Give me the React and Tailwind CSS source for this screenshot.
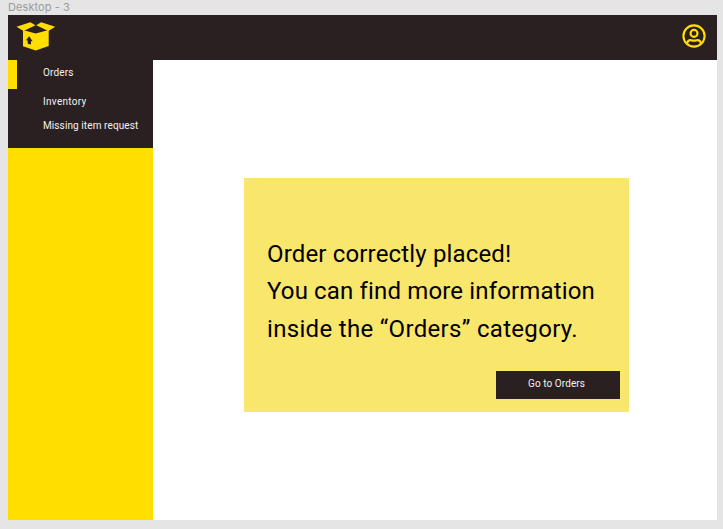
function BoxLogo() {
  return (
    <svg className="block h-[30px] w-[40px]" viewBox="0 0 40 30" fill="#ffde00">
      <path d="M0.500 5.700 14.300 1.300 19.500 4.200 7.500 10Z" />
      <path d="M20.200 4.200 25.200 1.300 39.200 5.700 32.300 10Z" />
      <path fillRule="evenodd" d="M7 9 19.700 12.600 32.700 9V25L19.700 29.400 7 25.300ZM13.200 15.200 9.900 19.300 11.700 19.600V22.700L15 23.500V20.200L16.600 20.300Z" />
    </svg>
  );
}

function UserIcon() {
  return (
    <svg className="block h-6 w-6" viewBox="0 0 24 24" fill="none" stroke="#ffde00" strokeWidth="2.100">
      <circle cx="12" cy="12" r="10.600" />
      <circle cx="12" cy="9.400" r="3.500" />
      <path d="M5.200 19.200C5.600 16.800 7.400 16 9.200 16.200Q12 17.100 14.800 16.200C16.600 16 18.400 16.800 18.800 19.200" />
    </svg>
  );
}

export default function App() {
  return (
    <div className="flex h-[529px] w-[723px] flex-col overflow-hidden bg-[#e5e5e5] pl-2 font-['Roboto',sans-serif]">
      <div className="h-[15px] shrink-0 whitespace-nowrap font-['Inter',sans-serif] text-[11px] leading-[14px] tracking-[0.08px] text-[#9b9b9b]">
        Desktop - 3
      </div>
      <div className="flex h-[505px] w-[709px] shrink-0 flex-col bg-white">
        <header className="flex h-[45px] shrink-0 items-start justify-between bg-[#2b2021] pl-2 pr-[11px]">
          <div className="pt-[6px]"><BoxLogo /></div>
          <div className="pt-[9px]"><UserIcon /></div>
        </header>
        <div className="flex min-h-0 flex-1">
          <aside className="w-[145px] shrink-0 bg-[#ffde00]">
            <nav className="flex h-[88px] bg-[#2b2021] text-[10px] leading-[14px] text-[#f4f2f2]">
              <div className="h-[29px] w-[9px] shrink-0 bg-[#ffde00]" />
              <div className="flex flex-col whitespace-nowrap pl-[26px] pt-[6px]">
                <a className="tracking-[0.15px]">Orders</a>
                <a className="mt-[15px] tracking-[0.300px]">Inventory</a>
                <a className="mt-[10px] tracking-[0.100px]">Missing item request</a>
              </div>
            </nav>
          </aside>
          <main className="flex-1 pl-[91px] pt-[118px]">
            <section className="flex h-[234px] w-[385px] flex-col bg-[#f9e66d] pl-[23px] pr-[9px]">
              <div className="whitespace-nowrap pt-[58px] text-[24px] text-black">
                <p className="leading-[37px] tracking-[0.160px]">Order correctly placed!</p>
                <p className="leading-[37px] tracking-[0.150px]">You can find more information</p>
                <p className="leading-[38px] tracking-[0.320px]">inside the “Orders” category.</p>
              </div>
              <button className="ml-auto mt-[23px] h-7 w-[124px] shrink-0 bg-[#2b2021] pb-[3px] pr-[3px] text-[10px] leading-[14px] tracking-[0.080px] text-[#f4f2f2]">
                Go to Orders
              </button>
            </section>
          </main>
        </div>
      </div>
    </div>
  );
}
